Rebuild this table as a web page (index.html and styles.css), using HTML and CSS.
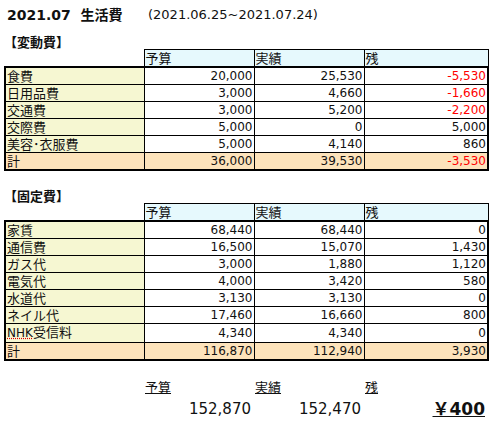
FILE: index.html
```html
<!DOCTYPE html>
<html lang="ja">
<head>
  <meta charset="UTF-8" />
  <title>2021.07 生活費</title>
  <link rel="stylesheet" href="styles.css">
</head>
<body>
  <div class="title">
    <span class="title-main">2021.07&nbsp; 生活費</span>
    <span class="period">(2021.06.25~2021.07.24)</span>
  </div>

  <div class="section">【変動費】</div>
  <table class="sheet">
    <colgroup><col class="c1"><col class="c2"><col class="c3"><col class="c4"></colgroup>
    <tr class="head">
      <td class="blank"></td><td>予算</td><td>実績</td><td>残</td>
    </tr>
    <tr class="first"><td class="label">食費</td><td>20,000</td><td>25,530</td><td class="minus">-5,530</td></tr>
    <tr><td class="label">日用品費</td><td>3,000</td><td>4,660</td><td class="minus">-1,660</td></tr>
    <tr><td class="label">交通費</td><td>3,000</td><td>5,200</td><td class="minus">-2,200</td></tr>
    <tr><td class="label">交際費</td><td>5,000</td><td>0</td><td>5,000</td></tr>
    <tr><td class="label">美容･衣服費</td><td>5,000</td><td>4,140</td><td>860</td></tr>
    <tr class="total"><td class="label">計</td><td>36,000</td><td>39,530</td><td class="minus">-3,530</td></tr>
  </table>

  <div class="section second">【固定費】</div>
  <table class="sheet">
    <colgroup><col class="c1"><col class="c2"><col class="c3"><col class="c4"></colgroup>
    <tr class="head">
      <td class="blank"></td><td>予算</td><td>実績</td><td>残</td>
    </tr>
    <tr class="first"><td class="label">家賃</td><td>68,440</td><td>68,440</td><td>0</td></tr>
    <tr><td class="label">通信費</td><td>16,500</td><td>15,070</td><td>1,430</td></tr>
    <tr><td class="label">ガス代</td><td>3,000</td><td>1,880</td><td>1,120</td></tr>
    <tr><td class="label">電気代</td><td>4,000</td><td>3,420</td><td>580</td></tr>
    <tr><td class="label">水道代</td><td>3,130</td><td>3,130</td><td>0</td></tr>
    <tr><td class="label">ネイル代</td><td>17,460</td><td>16,660</td><td>800</td></tr>
    <tr><td class="label"><span class="typo">NHK</span>受信料</td><td>4,340</td><td>4,340</td><td>0</td></tr>
    <tr class="total"><td class="label">計</td><td>116,870</td><td>112,940</td><td>3,930</td></tr>
  </table>

  <div class="summary">
    <span></span>
    <span class="sum-label">予算</span>
    <span class="sum-label">実績</span>
    <span class="sum-label">残</span>
    <span></span>
    <span class="sum-num">152,870</span>
    <span class="sum-num">152,470</span>
    <span class="sum-rest">￥400</span>
  </div>
</body>
</html>
```

FILE: styles.css
```css
body {
  margin: 0;
  padding: 0 4px;
  font-family: "DejaVu Sans", "Noto Sans CJK JP", sans-serif;
  color: #111;
  background: #fff;
}
.title {
  display: flex;
  align-items: center;
  height: 28px;
}
.title-main {
  width: 141px;
  padding-left: 3px;
  font-size: 14px;
  font-weight: bold;
  white-space: nowrap;
}
.period {
  font-size: 13px;
}
.section {
  margin-top: 7px;
  height: 14px;
  line-height: 14px;
  font-family: "Noto Sans CJK JP", sans-serif;
  font-size: 13px;
  font-weight: bold;
}
.section.second {
  margin-top: 18px;
}
.sheet {
  border-collapse: collapse;
  table-layout: fixed;
  width: 483px;
  font-size: 12px;
}
.sheet .c1 { width: 139px; }
.sheet .c2 { width: 110px; }
.sheet .c3 { width: 110px; }
.sheet .c4 { width: 124px; }
.sheet tr {
  height: 17px;
}
.sheet td {
  height: 15px;
  padding: 0 1px;
  line-height: 15px;
  border: 1px solid #000;
  text-align: right;
  white-space: nowrap;
  overflow: hidden;
}
.sheet .head td {
  background: #e6f9fd;
  text-align: left;
  font-family: "Noto Sans CJK JP", sans-serif;
  font-size: 13px;
  height: 14px;
  padding-bottom: 1px;
}
.sheet .head td.blank {
  background: none;
  border: none;
  border-bottom: 2px solid #000;
}
.sheet .first td {
  border-top: 2px solid #000;
}
.sheet tr:not(.head) td:first-child {
  border-left: 2px solid #000;
}
.sheet tr:not(.head) td:last-child {
  border-right: 2px solid #000;
}
.sheet .total td {
  background: #fde3bb;
  border-bottom: 2px solid #000;
}
.sheet td.label {
  background: #f6f7d2;
  text-align: left;
  font-family: "Noto Sans CJK JP", sans-serif;
  font-size: 13px;
  height: 14px;
  padding-bottom: 1px;
}
.sheet .total td.label {
  background: #fde3bb;
}
.minus {
  color: #ff0000;
}
.typo {
  text-decoration: underline dotted #e00000;
  font-family: "DejaVu Sans", sans-serif;
  font-size: 12px;
}
.summary {
  display: grid;
  grid-template-columns: 139px 110px 110px 124px;
  grid-template-rows: 16px 20px;
  row-gap: 4px;
  margin-top: 18px;
}
.sum-label {
  padding-left: 2px;
  line-height: 16px;
  font-family: "Noto Sans CJK JP", sans-serif;
  font-size: 13px;
  text-decoration: underline;
}
.sum-num {
  text-align: right;
  padding-right: 2px;
  line-height: 20px;
  font-size: 15px;
}
.sum-rest {
  text-align: right;
  padding-right: 2px;
  line-height: 20px;
  font-size: 17px;
  font-weight: bold;
  text-decoration: underline double;
}
```
